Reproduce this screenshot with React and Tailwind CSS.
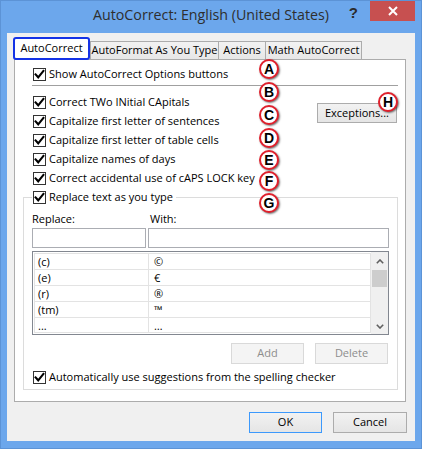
import React from "react";

const ui = "font-['Open_Sans',sans-serif] text-[11px] text-black";

function Check() {
  return (
    <span className="w-[13px] h-[13px] border border-[#333333] bg-white flex items-center justify-center shrink-0">
      <svg width="11" height="11" viewBox="0 0 11 11">
        <path d="M1.6 5.4 L4.2 8.3 L9.4 1.9" fill="none" stroke="#000" strokeWidth="2.1" strokeLinecap="square" />
      </svg>
    </span>
  );
}

function CheckRow({ label }) {
  return (
    <div className="flex items-center gap-[3px] h-[19px] whitespace-nowrap">
      <Check />
      <span>{label}</span>
    </div>
  );
}

function Button({ label, className = "", disabled, focused }) {
  return (
    <div
      className={
        "flex items-center justify-center border whitespace-nowrap " +
        (disabled
          ? "bg-[#f4f4f4] border-[#d9d9d9] text-[#8d8d8d] "
          : focused
          ? "bg-gradient-to-b from-[#f2f2f2] to-[#e5e5e5] border-[#3c99fc] "
          : "bg-gradient-to-b from-[#f2f2f2] to-[#e5e5e5] border-[#acacac] ") +
        className
      }
    >
      {label}
    </div>
  );
}

function Callout({ letter, x, y }) {
  return (
    <div
      className="absolute w-[20px] h-[20px] rounded-full bg-white border-2 border-[#e0202c] shadow-[1px_1px_2px_rgba(0,0,0,0.55)] flex items-center justify-center font-['Liberation_Sans',sans-serif] font-bold text-[14px] leading-none text-black"
      style={{ left: x - 10, top: y - 10 }}
    >
      {letter}
    </div>
  );
}

const entries = [
  ["(c)", "©"],
  ["(e)", "€"],
  ["(r)", "®"],
  ["(tm)", "™"],
  ["...", "…"],
];

const tab =
  "h-[18px] border border-b-0 border-[#acacac] bg-gradient-to-b from-[#f2f2f2] to-[#e7e7e7] flex items-center justify-center whitespace-nowrap";

export default function App() {
  return (
    <div className={"relative w-[422px] h-[449px] bg-[#6ca7ec] border border-[#5c93d6] flex flex-col px-[6px] pb-[7px] " + ui}>
      {/* title bar */}
      <div className="relative h-[32px] flex justify-center pt-[3px]">
        <span className="font-['Open_Sans',sans-serif] text-[14.25px] text-[#2e2e2e] leading-[22px]">
          AutoCorrect: English (United States)
        </span>
        <span className="absolute right-[57px] top-[3px] font-['Liberation_Sans',sans-serif] font-bold text-[15px] text-[#2b2b2b] leading-[18px]">
          ?
        </span>
        <div className="absolute right-0 top-0 w-[45px] h-[20px] bg-[#c75050] flex items-center justify-center">
          <svg width="10" height="10" viewBox="0 0 10 10">
            <path d="M1 1 L9 9 M9 1 L1 9" stroke="#fff" strokeWidth="2" />
          </svg>
        </div>
      </div>

      {/* dialog body */}
      <div className="flex-1 bg-[#f0f0f0] flex flex-col pt-[4px]">
        {/* tabs */}
        <div className="flex items-end h-[22px]">
          <div className="relative z-10 ml-[6px] w-[77px] h-[23px] -mb-px bg-white border-2 border-[#1432e6] rounded-[3px] flex items-center justify-center">
            AutoCorrect
          </div>
          <div className={"w-[129px] " + tab}>AutoFormat As You Type</div>
          <div className={"-ml-px w-[48px] " + tab}>Actions</div>
          <div className={"-ml-px w-[97px] " + tab}>Math AutoCorrect</div>
        </div>

        {/* tab page */}
        <div className="ml-[7px] w-[392px] h-[343px] bg-white border border-[#acacac] flex flex-col">
          <div className="mt-[5px] pl-[18px]">
            <CheckRow label="Show AutoCorrect Options buttons" />
          </div>
          <div className="mt-px ml-[17px] mr-[7px] h-px bg-[#a0a0a0]" />

          <div className="mt-[7px] flex">
            <div className="pl-[18px] flex flex-col">
              <CheckRow label="Correct TWo INitial CApitals" />
              <CheckRow label="Capitalize first letter of sentences" />
              <CheckRow label="Capitalize first letter of table cells" />
              <CheckRow label="Capitalize names of days" />
              <CheckRow label="Correct accidental use of cAPS LOCK key" />
            </div>
            <Button label="Exceptions..." className="ml-auto mr-[8px] mt-[10px] w-[80px] h-[20px]" />
          </div>

          <fieldset className="ml-[8px] mr-[7px] border border-[#dcdcdc] px-[8px] pb-[2px]">
            <legend className="pl-px pr-[3px] bg-white">
              <CheckRow label="Replace text as you type" />
            </legend>
            <div className="flex flex-col">
              <div className="mt-[4px] h-[16px] flex items-center">
                <span className="w-[116px]">Replace:</span>
                <span className="pl-[2px]">With:</span>
              </div>
              <div className="mt-px flex gap-[2px]">
                <div className="w-[114px] h-[20px] border border-[#abadb3] bg-white" />
                <div className="flex-1 h-[20px] border border-[#abadb3] bg-white" />
              </div>

              {/* replacement list */}
              <div className="mt-[3px] h-[84px] border border-[#828790] bg-white flex">
                <div className="flex-1 pt-px pl-px flex flex-col">
                  {entries.map(([from, to]) => (
                    <div key={from} className="h-[16px] flex border-t border-l border-[#e3e3e3] last:border-b">
                      <span className="w-[114px] border-r border-[#e3e3e3] pl-[3px] leading-[15px]">{from}</span>
                      <span className="flex-1 border-r border-[#e3e3e3] pl-[5px] leading-[15px]">{to}</span>
                    </div>
                  ))}
                </div>
                <div className="w-[17px] bg-[#f0f0f0] flex flex-col items-center">
                  <div className="h-[18px] flex items-center justify-center">
                    <svg width="8" height="5" viewBox="0 0 8 5">
                      <path d="M0.8 4.2 L4 1 L7.2 4.2" fill="none" stroke="#606060" strokeWidth="1.6" />
                    </svg>
                  </div>
                  <div className="w-[15px] h-[17px] bg-[#cdcdcd]" />
                  <div className="mt-auto h-[16px] flex items-center justify-center">
                    <svg width="8" height="5" viewBox="0 0 8 5">
                      <path d="M0.8 0.8 L4 4 L7.2 0.8" fill="none" stroke="#606060" strokeWidth="1.6" />
                    </svg>
                  </div>
                </div>
              </div>

              <div className="mt-[8px] flex justify-end gap-[11px] mr-px">
                <Button label="Add" disabled className="w-[73px] h-[21px]" />
                <Button label="Delete" disabled className="w-[73px] h-[21px]" />
              </div>
              <div className="mt-[4px] pl-px">
                <CheckRow label="Automatically use suggestions from the spelling checker" />
              </div>
            </div>
          </fieldset>
        </div>

        {/* dialog buttons */}
        <div className="mt-[10px] mr-[8px] flex justify-end gap-[11px]">
          <Button label="OK" focused className="w-[73px] h-[21px]" />
          <Button label="Cancel" className="w-[74px] h-[21px]" />
        </div>
      </div>

      <Callout letter="A" x={268} y={68} />
      <Callout letter="B" x={268} y={91} />
      <Callout letter="C" x={268} y={114} />
      <Callout letter="D" x={268} y={137} />
      <Callout letter="E" x={268} y={159} />
      <Callout letter="F" x={268} y={180} />
      <Callout letter="G" x={268} y={202} />
      <Callout letter="H" x={387} y={101} />
    </div>
  );
}
